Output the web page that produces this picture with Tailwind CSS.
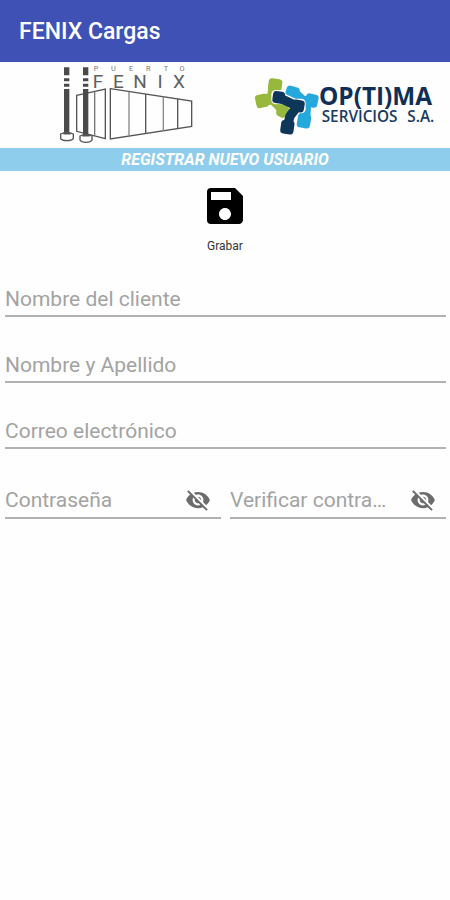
<!DOCTYPE html>
<html lang="es">
<head>
  <meta charset="UTF-8" />
  <meta name="viewport" content="width=device-width, initial-scale=1.0" />
  <title>FENIX Cargas</title>
  <script src="https://cdn.jsdelivr.net/npm/@tailwindcss/browser@4"></script>
</head>
<body class="bg-[#fefefe] min-h-screen font-[Roboto,sans-serif]">
  <header class="bg-[#3f51b5] h-[62px] px-[19px] pt-0.5 flex items-center">
    <h1 class="text-white text-[23px] leading-7 font-medium">FENIX Cargas</h1>
  </header>

  <!-- Logos -->
  <div class="flex justify-between pl-[50px] pr-[5px]">
    <svg class="w-[150px] h-[86px]" viewBox="0 6 450 258" role="img" aria-label="Puerto Fenix">
      <g fill="none" stroke="#555" stroke-width="4">
        <path d="M80 106 L166 87 V236 L80 214 Z" />
        <path d="M134 94 V228" stroke="#777" />
        <path d="M181 86 L425 123 V199 L181 237 Z" />
        <path d="M237 95 V229 M340 110 V213" stroke="#888" />
        <path d="M287 102 V221 M383 117 V206" />
      </g>
      <g fill="#4a4a4a">
        <path d="M42 22h16v24H42z M42 55h16v9H42z M42 71h16v9H42z M42 87h16v134H42z" />
        <path d="M99 22h16v24H99z M99 55h16v9H99z M99 71h16v9H99z M99 87h16v138H99z" />
      </g>
      <g fill="#fefefe" stroke="#555" stroke-width="4">
        <path d="M32 222 Q50 213 70 222 V236 Q66 242 50 242 Q36 242 32 236 Z" />
        <path d="M90 228 Q108 220 126 228 V240 Q122 247 108 247 Q94 247 90 240 Z" />
      </g>
      <path d="M40 221h22M97 227h22" stroke="#555" stroke-width="5" />
      <g fill="#777" font-family="Roboto, sans-serif" font-size="22" text-anchor="middle">
        <text x="138" y="34">P</text>
        <text x="190" y="34">U</text>
        <text x="243" y="34">E</text>
        <text x="295" y="34">R</text>
        <text x="348" y="34">T</text>
        <text x="396" y="34">O</text>
      </g>
      <g fill="#606060" font-family="Roboto, sans-serif" font-size="57" text-anchor="middle">
        <text x="144" y="83">F</text>
        <text x="205" y="83">E</text>
        <text x="270" y="83">N</text>
        <text x="330" y="83">I</text>
        <text x="387" y="83">X</text>
      </g>
    </svg>
    <svg class="w-[200px] h-[86px]" viewBox="0 -9 600 258" role="img" aria-label="Optima Servicios S.A.">
      <g transform="translate(15 21)" stroke-linejoin="round">
        <!-- verde -->
        <g fill="#97b83c">
          <path d="M74 38 L68 79 L103 113 M36 86 L68 79" fill="none" stroke="#97b83c" stroke-width="35" />
          <rect x="55" y="20" width="41" height="38" rx="10" transform="rotate(8 75 38)" />
          <rect x="17" y="67" width="38" height="40" rx="10" transform="rotate(-12 35 87)" />
          <rect x="83" y="96" width="38" height="42" rx="10" transform="rotate(25 103 116)" />
        </g>
        <!-- celeste -->
        <g fill="#25a8dc">
          <path d="M127 62 L160 92 L187 86 M166 92 L162 148" fill="none" stroke="#25a8dc" stroke-width="36" />
          <rect x="107" y="43" width="40" height="38" rx="10" transform="rotate(15 127 62)" />
          <rect x="166" y="66" width="38" height="40" rx="10" transform="rotate(12 186 86)" />
          <rect x="142" y="126" width="40" height="42" rx="10" transform="rotate(10 162 147)" />
        </g>
        <!-- azul oscuro -->
        <g fill="#fefefe">
          <path d="M86 76 L144 103 L120 130 L112 165" fill="none" stroke="#fefefe" stroke-width="35" />
          <rect x="64" y="54" width="43" height="43" rx="13" />
          <rect x="121" y="80" width="46" height="44" rx="13" />
          <rect x="89" y="142" width="46" height="46" rx="13" />
        </g>
        <path d="M78 102 L104 100 L115 112 L116 124 L102 132 L86 124 Z" fill="#97b83c" stroke="#97b83c" stroke-width="8" />
        <g fill="#0d3658">
          <path d="M86 76 L142 103 L120 132 L112 165" fill="none" stroke="#0d3658" stroke-width="28" />
          <rect x="68" y="58" width="36" height="36" rx="10" transform="rotate(8 86 76)" />
          <rect x="125" y="84" width="38" height="36" rx="10" transform="rotate(10 144 102)" />
          <rect x="92" y="145" width="40" height="41" rx="10" transform="rotate(8 112 166)" />
        </g>
      </g>
      <text x="222" y="121" fill="#0e2f57" font-family="'Open Sans', sans-serif" font-weight="700" font-size="73">OP(TI)MA</text>
      <g fill="#173a5e" font-family="'Open Sans', sans-serif" font-weight="600" font-size="46">
        <text x="230" y="172">SERVICIOS</text>
        <text x="487" y="172">S.A.</text>
      </g>
    </svg>
  </div>

  <h2 class="bg-[#8ecdec] text-white text-center text-base leading-[22px] pt-px font-bold italic">REGISTRAR NUEVO USUARIO</h2>

  <form>
    <!-- Grabar -->
    <div class="flex justify-center pt-[11px]">
      <button type="submit" class="flex flex-col items-center gap-2 text-xs leading-4 text-[#333]">
        <svg class="w-12 h-12" viewBox="0 0 24 24" fill="#000" aria-hidden="true">
          <path d="M17 3H5a2 2 0 0 0-2 2v14a2 2 0 0 0 2 2h14c1.100 0 2-.9 2-2V7l-4-4zm-5 16c-1.660 0-3-1.340-3-3s1.340-3 3-3 3 1.340 3 3-1.340 3-3 3zm3-10H5V5h10v4z" />
        </svg>
        Grabar
      </button>
    </div>

    <!-- Campos -->
    <div class="flex flex-col gap-[30px] pl-[5px] pr-1 pt-[27px]">
      <input type="text" aria-label="Nombre del cliente" placeholder="Nombre del cliente"
        class="w-full h-9 border-b-2 border-[#b2b2b2] pt-0.5 text-[21px] leading-7 placeholder:text-[#a3a3a3] outline-none" />
      <input type="text" aria-label="Nombre y Apellido" placeholder="Nombre y Apellido"
        class="w-full h-9 border-b-2 border-[#b2b2b2] pt-0.5 text-[21px] leading-7 placeholder:text-[#a3a3a3] outline-none" />
      <input type="email" aria-label="Correo electrónico" placeholder="Correo electrónico"
        class="w-full h-9 border-b-2 border-[#b2b2b2] pt-0.5 text-[21px] leading-7 placeholder:text-[#a3a3a3] outline-none" />

      <div class="grid grid-cols-2 gap-[9px]">
        <div class="flex items-center gap-5 h-10 border-b-2 border-[#b2b2b2] pt-1 pr-[10px]">
          <input type="password" aria-label="Contraseña" placeholder="Contraseña"
            class="flex-1 min-w-0 text-[21px] leading-7 text-ellipsis placeholder:text-[#a3a3a3] outline-none" />
          <button type="button" aria-label="Mostrar contraseña">
            <svg class="w-[26px] h-[26px]" viewBox="0 0 24 24" fill="#6c6c6c" aria-hidden="true">
              <path d="M12 7c2.760 0 5 2.240 5 5 0 .65-.13 1.260-.36 1.830l2.920 2.920c1.510-1.260 2.700-2.890 3.430-4.750-1.730-4.390-6-7.500-11-7.500-1.400 0-2.740.25-3.980.7l2.160 2.160C10.740 7.130 11.350 7 12 7zM2 4.270l2.280 2.280.46.46C3.080 8.300 1.780 10.020 1 12c1.730 4.390 6 7.500 11 7.500 1.550 0 3.030-.3 4.380-.84l.42.42L19.730 22 21 20.730 3.270 3 2 4.270zM7.530 9.800l1.550 1.550c-.05.21-.08.43-.08.65 0 1.660 1.340 3 3 3 .22 0 .44-.03.65-.08l1.550 1.550c-.67.33-1.410.53-2.200.53-2.760 0-5-2.240-5-5 0-.79.2-1.530.53-2.200zm4.310-.78l3.150 3.150.02-.16c0-1.660-1.340-3-3-3l-.17.01z" />
            </svg>
          </button>
        </div>
        <div class="flex items-center gap-5 h-10 border-b-2 border-[#b2b2b2] pt-1 pr-[10px]">
          <input type="password" aria-label="Verificar contraseña" placeholder="Verificar contraseña"
            class="flex-1 min-w-0 text-[21px] leading-7 text-ellipsis placeholder:text-[#a3a3a3] outline-none" />
          <button type="button" aria-label="Mostrar verificación de contraseña">
            <svg class="w-[26px] h-[26px]" viewBox="0 0 24 24" fill="#6c6c6c" aria-hidden="true">
              <path d="M12 7c2.760 0 5 2.240 5 5 0 .65-.13 1.260-.36 1.830l2.920 2.920c1.510-1.260 2.700-2.890 3.430-4.750-1.730-4.390-6-7.500-11-7.500-1.400 0-2.740.25-3.980.7l2.160 2.160C10.740 7.130 11.350 7 12 7zM2 4.270l2.280 2.280.46.46C3.080 8.300 1.780 10.020 1 12c1.730 4.390 6 7.500 11 7.500 1.550 0 3.030-.3 4.380-.84l.42.42L19.730 22 21 20.730 3.270 3 2 4.270zM7.530 9.800l1.550 1.550c-.05.21-.08.43-.08.65 0 1.660 1.340 3 3 3 .22 0 .44-.03.65-.08l1.550 1.550c-.67.33-1.410.53-2.200.53-2.760 0-5-2.240-5-5 0-.79.2-1.530.53-2.200zm4.310-.78l3.150 3.150.02-.16c0-1.660-1.340-3-3-3l-.17.01z" />
            </svg>
          </button>
        </div>
      </div>
    </div>
  </form>
</body>
</html>
